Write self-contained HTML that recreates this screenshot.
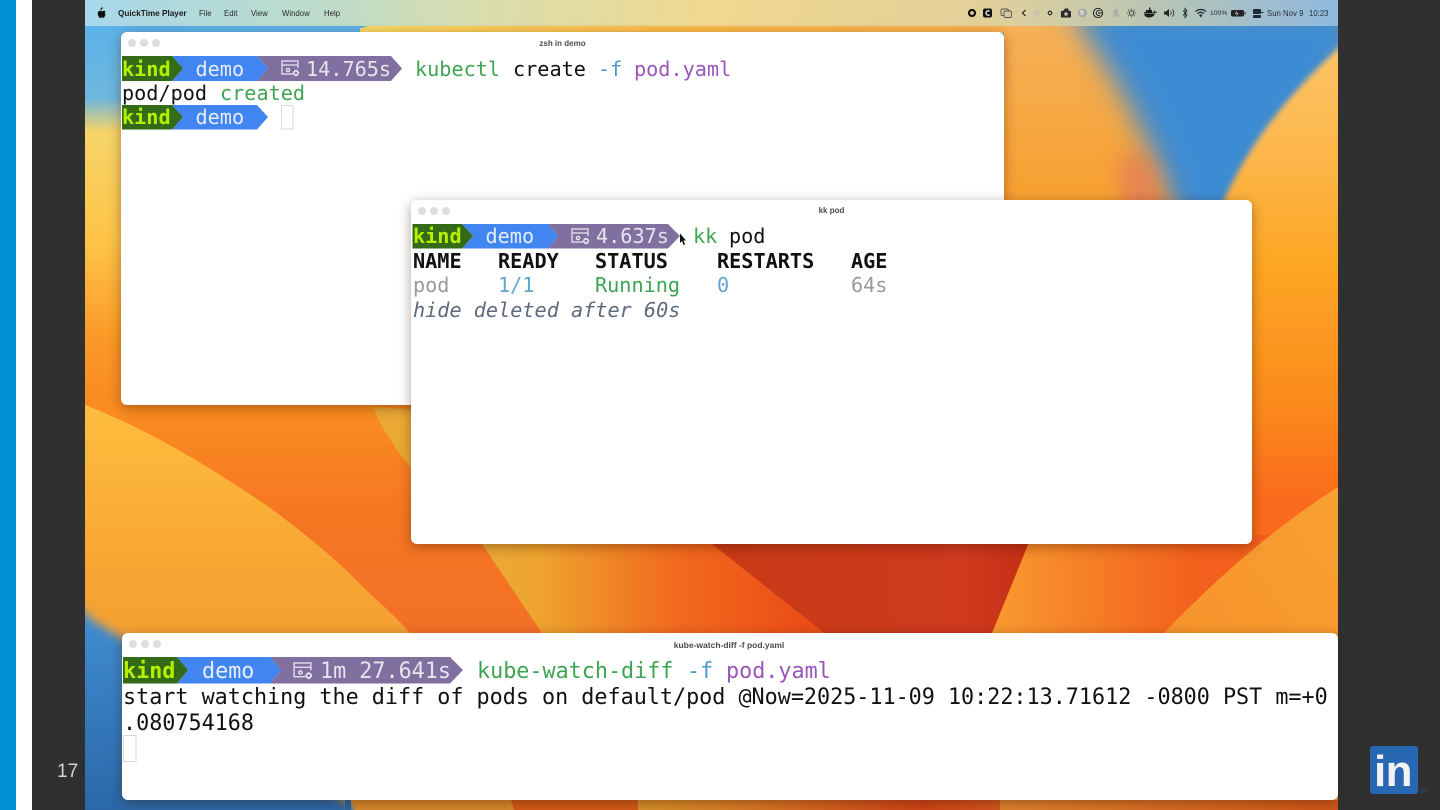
<!DOCTYPE html>
<html><head><meta charset="utf-8"><style>
html,body{margin:0;padding:0;width:1440px;height:810px;overflow:hidden;background:#303030}
body{position:relative;font-family:"Liberation Sans",sans-serif}
.a{position:absolute}
.win{position:absolute;background:#fff;border-radius:6px;box-shadow:0 3px 12px rgba(60,20,0,.4)}
.dot{position:absolute;width:8px;height:8px;border-radius:50%;background:#dedede}
.title{position:absolute;top:6px;left:0;right:0;text-align:center;font-size:8px;font-weight:bold;line-height:10px;color:#4a4a4a;filter:blur(.25px)}
.t{position:absolute;white-space:pre;font-family:"DejaVu Sans Mono","Liberation Mono",monospace;font-size:20.2px;line-height:24px;color:#111;filter:blur(.25px)}
.l{font-size:21.76px;line-height:26px}
.b{font-weight:bold}
.k{color:#b6f000;font-weight:bold}.w{color:#e6eefc}.g{color:#e6e4ee}.gr{color:#3ea553}.bl{color:#4b9ac8}.pu{color:#9a56bb}
.m{position:absolute;top:8.5px;font-size:7.8px;line-height:10px;color:#2b2b2b;white-space:pre;filter:blur(.25px)}
</style></head><body>
<div class="a" style="left:0;top:0;width:16px;height:810px;background:#0090d2"></div>
<div class="a" style="left:16px;top:0;width:16px;height:810px;background:#fff"></div>
<div class="a" style="left:32px;top:0;width:53px;height:810px;background:#303030"></div>
<div class="a" style="left:1338px;top:0;width:102px;height:810px;background:#303030"></div>

<svg class="a" style="left:85px;top:0" width="1253" height="810" viewBox="85 0 1253 810">
<defs>
<linearGradient id="lt" x1="0" y1="26" x2="0" y2="405" gradientUnits="userSpaceOnUse">
<stop offset="0" stop-color="#5cb2ea"/><stop offset=".19" stop-color="#6db7dc"/><stop offset=".28" stop-color="#f6d468"/><stop offset=".58" stop-color="#fdc345"/><stop offset=".82" stop-color="#fb9a26"/><stop offset="1" stop-color="#f98a1f"/></linearGradient>
<linearGradient id="lobe" x1="0" y1="405" x2="0" y2="640" gradientUnits="userSpaceOnUse">
<stop offset="0" stop-color="#ffbe3e"/><stop offset=".7" stop-color="#f7a532"/><stop offset="1" stop-color="#f4a033"/></linearGradient>
<linearGradient id="wedge" x1="0" y1="405" x2="0" y2="633" gradientUnits="userSpaceOnUse">
<stop offset="0" stop-color="#fa8d20"/><stop offset=".5" stop-color="#f67622"/><stop offset="1" stop-color="#f27026"/></linearGradient>
<linearGradient id="pan" x1="490" y1="0" x2="800" y2="0" gradientUnits="userSpaceOnUse">
<stop offset="0" stop-color="#eaa935"/><stop offset=".15" stop-color="#eea52f"/><stop offset=".6" stop-color="#f26a1e"/><stop offset="1" stop-color="#ec4f16"/></linearGradient>
<linearGradient id="red" x1="720" y1="0" x2="1030" y2="0" gradientUnits="userSpaceOnUse">
<stop offset="0" stop-color="#c93a16"/><stop offset=".8" stop-color="#cf3a1e"/><stop offset="1" stop-color="#c62e14"/></linearGradient>
<linearGradient id="pr" x1="1000" y1="0" x2="1200" y2="0" gradientUnits="userSpaceOnUse">
<stop offset="0" stop-color="#f8982e"/><stop offset="1" stop-color="#f35f1c"/></linearGradient>
<linearGradient id="rl" x1="0" y1="26" x2="0" y2="500" gradientUnits="userSpaceOnUse">
<stop offset="0" stop-color="#fdc66a"/><stop offset=".25" stop-color="#fdb84e"/><stop offset=".5" stop-color="#fda724"/><stop offset=".8" stop-color="#fb8a1c"/><stop offset="1" stop-color="#f96b1e"/></linearGradient>
<linearGradient id="lo" x1="0" y1="26" x2="0" y2="200" gradientUnits="userSpaceOnUse">
<stop offset="0" stop-color="#f6b058"/><stop offset="1" stop-color="#f7a030"/></linearGradient>
<linearGradient id="rb" x1="1160" y1="633" x2="1338" y2="490" gradientUnits="userSpaceOnUse">
<stop offset="0" stop-color="#f7932c"/><stop offset="1" stop-color="#f8a032"/></linearGradient>
<linearGradient id="menu" x1="85" y1="0" x2="1338" y2="0" gradientUnits="userSpaceOnUse">
<stop offset="0" stop-color="#a8d8ea"/><stop offset=".2" stop-color="#bfdcc8"/><stop offset=".3" stop-color="#d6deb0"/><stop offset=".5" stop-color="#f0d88f"/><stop offset=".72" stop-color="#e2d09a"/><stop offset=".85" stop-color="#b9c6b4"/><stop offset="1" stop-color="#8fb9de"/></linearGradient>
<linearGradient id="blu" x1="0" y1="620" x2="0" y2="810" gradientUnits="userSpaceOnUse">
<stop offset="0" stop-color="#3f8bd0"/><stop offset="1" stop-color="#2a68a8"/></linearGradient>
<linearGradient id="strip" x1="360" y1="0" x2="1020" y2="0" gradientUnits="userSpaceOnUse"><stop offset="0" stop-color="#f9d862"/><stop offset=".45" stop-color="#fbbd4c"/><stop offset="1" stop-color="#f7b050"/></linearGradient>
<linearGradient id="bs1" x1="638" y1="0" x2="1000" y2="0" gradientUnits="userSpaceOnUse"><stop offset="0" stop-color="#d8922a"/><stop offset=".3" stop-color="#d87c26"/><stop offset=".78" stop-color="#d04418"/><stop offset="1" stop-color="#d4561e"/></linearGradient>
<linearGradient id="bs2" x1="1000" y1="0" x2="1338" y2="0" gradientUnits="userSpaceOnUse"><stop offset="0" stop-color="#e0842e"/><stop offset="1" stop-color="#d05618"/></linearGradient>
<filter id="b4" x="-30%" y="-30%" width="160%" height="160%"><feGaussianBlur stdDeviation="5"/></filter>
<filter id="b3" x="-10%" y="-10%" width="120%" height="120%"><feGaussianBlur stdDeviation="3"/></filter>
<filter id="b10" x="-50%" y="-50%" width="200%" height="200%"><feGaussianBlur stdDeviation="10"/></filter>
<filter id="b14" x="-30%" y="-30%" width="160%" height="160%"><feGaussianBlur stdDeviation="14"/></filter>
<clipPath id="cw"><rect x="85" y="26" width="1253" height="784"/></clipPath>
<clipPath id="cbl"><rect x="85" y="560" width="300" height="250"/></clipPath>
<clipPath id="cr"><rect x="1004" y="26" width="334" height="540"/></clipPath>
<g id="ic" fill="none" stroke="#eceaf2" stroke-width="1.2"><path d="M12 14H1V1H17V8"/><path d="M1 5H17"/><circle cx="7" cy="10" r="1.6" stroke-width="1.3"/><circle cx="15" cy="13" r="2.2" stroke-width="1.6"/><path d="M15 9.7V10.6M15 15.4V16.4M11.8 13H12.7M17.3 13H18.2" stroke-width="1"/></g>
</defs>
<g clip-path="url(#cw)">
<rect x="85" y="26" width="1253" height="784" fill="#f98a1f"/>
<rect x="85" y="26" width="940" height="390" fill="url(#lt)"/>
<rect x="360" y="26" width="660" height="7" fill="url(#strip)"/>
<path d="M85 26H368L345 33H85Z" fill="#5cb2ea"/>
<!-- right upper -->
<g clip-path="url(#cr)">
<rect x="1004" y="26" width="334" height="230" fill="url(#lo)"/>
<g filter="url(#b14)"><path d="M1066 5C1110 70 1150 130 1182 240H1260L1360 40V5Z" fill="#3c8bd2"/></g>
<g filter="url(#b10)" opacity=".75"><path d="M1118 155L1150 155L1172 235H1125Z" fill="#e27a5c"/></g>
<g filter="url(#b3)"><path d="M1222 205C1245 150 1285 95 1350 38V570H1222Z" fill="url(#rl)"/></g>
</g>
<!-- lower panels -->
<path d="M85 400H380L410 450L482 544L542 633L650 810H85Z" fill="url(#wedge)"/>
<path d="M85 405C150 430 215 470 269 507C300 530 325 550 349 573C370 595 392 612 410 633L470 810H85Z" fill="url(#lobe)"/>
<path d="M373 407C395 460 440 500 482 544L542 633L640 810H900L824 633L712 544L600 420Z" fill="url(#pan)"/>
<path d="M712 544L824 633L915 810H965L992 633L1032 544Z" fill="url(#red)"/>
<path d="M1032 535L992 633L965 810H1340V535Z" fill="url(#pr)"/>
<path d="M1338 487C1270 530 1210 585 1164 633L1050 810H1338Z" fill="url(#rb)"/>
<g clip-path="url(#cbl)"><g filter="url(#b4)"><path d="M70 600L95 622L125 640L200 700L351 805L360 820H70Z" fill="url(#blu)"/></g></g>
<rect x="345" y="800" width="6" height="10" fill="#2a68a8"/>
<path d="M351 800H511L514 810H356Z" fill="#d88a2c"/>
<path d="M511 800H638L642 810H514Z" fill="#d45a18"/>
<rect x="638" y="800" width="362" height="10" fill="url(#bs1)"/>
<rect x="1000" y="800" width="338" height="10" fill="url(#bs2)"/>
</g>
<rect x="85" y="0" width="1253" height="26" fill="url(#menu)"/>
<path d="M101.800 9.400C102.500 8.600 102.800 8 102.800 7.200C102 7.300 101.200 7.800 100.800 8.500C100.500 9 100.300 9.600 100.400 10.100C101 10.200 101.400 9.900 101.800 9.400ZM104.900 15.800C105.300 15.200 105.500 14.800 105.700 14.300C104.700 13.900 104.600 12.300 105.600 11.700C105.200 11.100 104.500 10.700 103.800 10.700C103 10.700 102.400 11.100 102 11.100C101.500 11.100 100.900 10.700 100.200 10.700C99 10.700 97.700 11.700 97.700 13.600C97.700 15.500 99.200 17.900 100.300 17.900C100.900 17.900 101.200 17.500 102 17.500C102.800 17.500 103 17.900 103.600 17.900C104.200 17.900 104.600 17.200 104.900 15.800Z" fill="#111"/>
<!-- menu extras -->
<circle cx="972" cy="13" r="3" fill="none" stroke="#111" stroke-width="2.200"/>
<rect x="983" y="8.500" width="9" height="9" rx="2" fill="#111"/><path d="M989.500 11.200A2.200 2.200 0 1 0 989.500 14.800" fill="none" stroke="#fff" stroke-width="1.200"/>
<rect x="1001" y="9" width="7.500" height="6.500" rx="1.500" fill="none" stroke="#555" stroke-width=".9"/><rect x="1004" y="11" width="7.500" height="6.500" rx="1.500" fill="#d5c9a4" stroke="#555" stroke-width=".9"/>
<path d="M1025.500 10L1022.500 13L1025.500 16" fill="none" stroke="#222" stroke-width="1.200"/>
<rect x="1033" y="9.500" width="7" height="7" rx="2" fill="#c9c3ab" opacity=".8"/>
<circle cx="1050" cy="13" r="1.800" fill="none" stroke="#222" stroke-width="1.100"/>
<path d="M1061 11H1063L1065 8.500L1068 8.500L1069 11H1071V17.500H1061Z" fill="#2b2b2b"/><circle cx="1066" cy="14" r="1.800" fill="#bbb"/>
<circle cx="1082.500" cy="13" r="4.500" fill="#a8aaa6"/><path d="M1080 10L1084 11L1083 15L1081 15Z" fill="#d8d8d0"/>
<circle cx="1098" cy="13" r="4.600" fill="none" stroke="#222" stroke-width="1"/><path d="M1100 11A2.400 2.400 0 1 0 1100 15M1098 13H1103" fill="none" stroke="#222" stroke-width="1"/>
<path d="M1118 9A4 4 0 1 0 1120 15.500A4.500 4.500 0 0 1 1118 9Z" fill="#a9b0a8"/>
<circle cx="1131.500" cy="13" r="2.200" fill="none" stroke="#333" stroke-width=".9"/><path d="M1131.500 8.500V9.800M1131.500 16.200V17.500M1127 13H1128.300M1134.700 13H1136M1128.300 9.800L1129.200 10.700M1133.800 15.300L1134.700 16.200M1128.300 16.200L1129.200 15.300M1133.800 10.700L1134.700 9.800" stroke="#333" stroke-width=".8"/>
<path d="M1144 13H1155C1156 13 1157 12.500 1157 12C1156.500 11.500 1155.500 11.500 1155 12C1154.800 11 1154.500 10.500 1154 10L1153.500 12.500H1152V10H1150.500V7.500H1149V10H1146V12H1144.500ZM1144 13.500C1144.500 16.500 1146.500 17.500 1149 17.500C1152 17.500 1154 16 1155 13.500Z" fill="#1c1c1c"/>
<path d="M1164 11.500H1166L1169 9V17L1166 14.500H1164Z" fill="#222"/><path d="M1170.500 11A3 3 0 0 1 1170.500 15M1172.500 9.500A5 5 0 0 1 1172.500 16.500" fill="none" stroke="#222" stroke-width=".8"/>
<path d="M1183 10.500L1187 15L1185 17.500V8.500L1187 11L1183 15.500" fill="none" stroke="#222" stroke-width=".9"/>
<path d="M1195.500 11.500A8 8 0 0 1 1206 11.500M1197.500 13.500A5 5 0 0 1 1204 13.500" fill="none" stroke="#1f2a30" stroke-width="1.300"/><path d="M1199 15L1200.700 17.500L1202.500 15A3 3 0 0 0 1199 15Z" fill="#1f2a30"/>
<rect x="1231" y="10" width="13" height="6.500" rx="1.500" fill="#222"/><rect x="1244.500" y="12" width="1" height="2.500" fill="#222"/><path d="M1237 11L1235.500 13.500H1238L1236.500 15.500" stroke="#ccc" stroke-width=".7" fill="none"/>
<rect x="1253" y="9" width="8" height="5" rx="1" fill="#1f2a38"/><rect x="1253" y="15" width="8" height="3" rx="1" fill="#1f2a38"/><path d="M1261 12.500H1263.500" stroke="#1f2a38"/>
</svg>

<!-- menu bar text -->
<div class="m" style="left:118px;font-weight:bold;font-size:8.2px;color:#1a1a1a">QuickTime Player</div>
<div class="m" style="left:199px">File</div>
<div class="m" style="left:224px">Edit</div>
<div class="m" style="left:251px">View</div>
<div class="m" style="left:282px">Window</div>
<div class="m" style="left:324px">Help</div>
<div class="m" style="left:1210px;font-size:6.800px">100%</div>
<div class="m" style="left:1267px;color:#24303c">Sun Nov 9</div>
<div class="m" style="left:1309px;color:#24303c">10:23</div>

<!-- top window -->
<div class="win" style="left:121px;top:32px;width:883px;height:373px">
<i class="dot" style="left:7px;top:7px"></i><i class="dot" style="left:19px;top:7px"></i><i class="dot" style="left:31px;top:7px"></i>
<div class="title" style="top:6.500px">zsh in demo</div>
</div>
<svg class="a" style="left:121px;top:50px" width="300" height="90" viewBox="121 50 300 90">
<path d="M257 56H391L402 68.500L391 81H257L268 68.500Z" fill="#80709f"/>
<path d="M172 56H257L268 68.500L257 81H172L183 68.500Z" fill="#4186f0"/>
<path d="M122 56H172L183 68.500L172 81H122Z" fill="#336b18"/>
<use href="#ic" x="281" y="60"/>
<path d="M172 105H257L268 117L257 129.500H172L183 117Z" fill="#4186f0"/>
<path d="M122 105H172L183 117L172 129.500H122Z" fill="#336b18"/>
<rect x="281.500" y="105.500" width="11.500" height="23.500" fill="#fff" stroke="#d9d9d9"/>
</svg>
<div class="t k" style="left:122px;top:57px">kind</div>
<div class="t w" style="left:195.500px;top:57px">demo</div>
<div class="t g" style="left:306px;top:57px">14.765s</div>
<div class="t gr" style="left:415px;top:57px">kubectl</div>
<div class="t" style="left:513px;top:57px">create</div>
<div class="t bl" style="left:598px;top:57px">-f</div>
<div class="t pu" style="left:634px;top:57px">pod.yaml</div>
<div class="t" style="left:122px;top:81px">pod/pod</div>
<div class="t gr" style="left:220px;top:81px">created</div>
<div class="t k" style="left:122px;top:105px">kind</div>
<div class="t w" style="left:195.500px;top:105px">demo</div>

<!-- middle window -->
<div class="win" style="left:411px;top:200px;width:841px;height:344px">
<i class="dot" style="left:7px;top:7px"></i><i class="dot" style="left:19px;top:7px"></i><i class="dot" style="left:31px;top:7px"></i>
<div class="title">kk pod</div>
</div>
<svg class="a" style="left:411px;top:220px" width="285" height="35" viewBox="411 220 285 35">
<path d="M548 224H668L680 236L668 248.500H548L558 236Z" fill="#80709f"/>
<path d="M462 224H548L558 236L548 248.500H462L473 236Z" fill="#4186f0"/>
<path d="M412.500 224H462L473 236L462 248.500H412.500Z" fill="#336b18"/>
<use href="#ic" x="571" y="228"/>
<path d="M680 233.500V243L682 241L683.500 245L685 244.500L683.500 240.500H686Z" fill="#111"/>
</svg>
<div class="t k" style="left:413px;top:224px">kind</div>
<div class="t w" style="left:485.500px;top:224px">demo</div>
<div class="t g" style="left:596px;top:224px">4.637s</div>
<div class="t gr" style="left:693px;top:224px">kk</div>
<div class="t" style="left:729px;top:224px">pod</div>
<div class="t b" style="left:413px;top:249px">NAME</div>
<div class="t b" style="left:498px;top:249px">READY</div>
<div class="t b" style="left:595px;top:249px">STATUS</div>
<div class="t b" style="left:717px;top:249px">RESTARTS</div>
<div class="t b" style="left:851px;top:249px">AGE</div>
<div class="t" style="left:413px;top:273px;color:#9a9a9a">pod</div>
<div class="t" style="left:498px;top:273px;color:#62a6cf">1/1</div>
<div class="t gr" style="left:595px;top:273px">Running</div>
<div class="t" style="left:717px;top:273px;color:#62a6cf">0</div>
<div class="t" style="left:851px;top:273px;color:#9a9a9a">64s</div>
<div class="t" style="left:413px;top:297.500px;color:#5e6a7e;font-style:italic">hide deleted after 60s</div>

<!-- bottom window -->
<div class="win" style="left:122px;top:633px;width:1216px;height:167px">
<i class="dot" style="left:7px;top:7px"></i><i class="dot" style="left:19px;top:7px"></i><i class="dot" style="left:31px;top:7px"></i>
<div class="title" style="top:6.500px;font-size:8.500px;left:-2px">kube-watch-diff -f pod.yaml</div>
</div>
<svg class="a" style="left:122px;top:650px" width="350" height="120" viewBox="122 650 350 120">
<path d="M270 657H450L463 670L450 683.500H270L281 670Z" fill="#80709f"/>
<path d="M177 657H270L281 670L270 683.500H177L188 670Z" fill="#4186f0"/>
<path d="M123 657H177L188 670L177 683.500H123Z" fill="#336b18"/>
<g transform="translate(293 662) scale(1.050)"><use href="#ic"/></g>
<rect x="123.500" y="735.500" width="12.500" height="26" fill="#fff" stroke="#d9d9d9"/>
</svg>
<div class="t l k" style="left:123px;top:659px">kind</div>
<div class="t l w" style="left:202px;top:659px">demo</div>
<div class="t l g" style="left:320px;top:659px">1m 27.641s</div>
<div class="t l gr" style="left:477px;top:659px">kube-watch-diff</div>
<div class="t l bl" style="left:687px;top:659px">-f</div>
<div class="t l pu" style="left:726px;top:659px">pod.yaml</div>
<div class="t l" style="left:123px;top:685px">start watching the diff of pods on default/pod @Now=2025-11-09 10:22:13.71612 -0800 PST m=+0</div>
<div class="t l" style="left:123px;top:711px">.080754168</div>

<!-- slide furniture -->
<div class="a" style="left:57px;top:760px;font-size:19px;line-height:24px;color:#d4d4d4">17</div>
<div class="a" style="left:1370px;top:746px;width:48px;height:48px;background:#2867b2;border-radius:3px;overflow:hidden">
<div class="a" style="left:4px;top:3.700px;font-size:44px;line-height:44px;font-weight:bold;color:#f2f2f2;letter-spacing:-.6px">in</div>
</div>
<div class="a" style="left:1421px;top:789px;width:5px;height:5px;border-radius:50%;border:1px solid #1d4a80;box-sizing:border-box"></div>
</body></html>
